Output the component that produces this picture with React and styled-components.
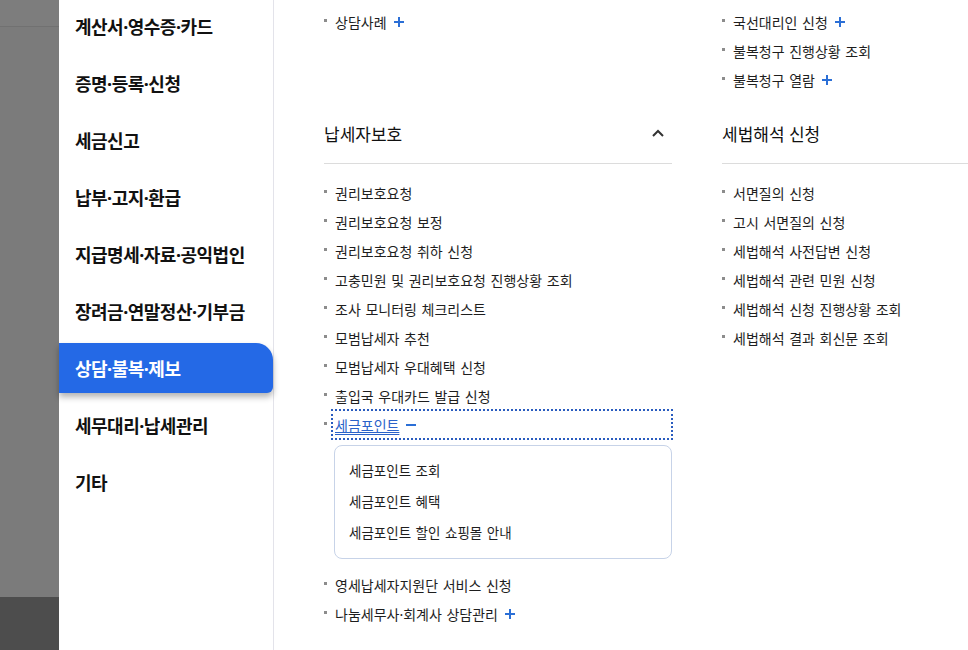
import React from 'react';
import styled, { createGlobalStyle, css } from 'styled-components';

//STYLE
const GlobalStyle = createGlobalStyle`
  html, body { margin: 0; padding: 0; background: #fff; }
  body { font-family: "Noto Sans", "Noto Sans CJK KR", sans-serif; color: #1e1e1e; }
  ul { list-style: none; margin: 0; padding: 0; }
`;

const Page = styled.div`display: flex; height: 650px; overflow: hidden;`;

const Backdrop = styled.div`width: 59px; flex-shrink: 0; display: flex; flex-direction: column; background: #7b7b7b;`;
const BackdropTop = styled.div`height: 26px; border-bottom: 1px solid #717171; background: #7d7d7d;`;
const BackdropMid = styled.div`flex: 1;`;
const BackdropFoot = styled.div`height: 53px; background: #4d4d4d;`;

const Sidebar = styled.ul`
  width: 214px; flex-shrink: 0; padding-top: 1px;
  border-right: 1px solid #e3e3ea; background: #fff;
  display: flex; flex-direction: column; gap: 7px;
`;
const SideItem = styled.li`
  height: 50px; display: flex; align-items: center; padding-left: 16px;
  font-size: 18px; font-weight: 700; letter-spacing: -0.5px; color: #111;
  ${p => p.$active && css`
    background: #2469e6; color: #fff;
    border-radius: 0 17px 6px 0;
    box-shadow: 0 4px 6px rgba(0, 0, 0, 0.3);
  `}
`;

const Content = styled.div`flex: 1; overflow: hidden; padding: 7px 0 0 50px;`;
const Grid = styled.div`display: grid; grid-template-columns: 348px 348px; column-gap: 50px; row-gap: 9px;`;
const Section = styled.section``;
const Heading = styled.div`
  height: 60px; display: flex; align-items: center; justify-content: space-between;
  border-bottom: 1px solid #dcdcdc; padding-right: 8px;
  font-size: 17px; color: #111;
`;
const List = styled.ul`padding-top: ${p => p.$top || 0}px;`;
const Item = styled.li`
  height: 29px; display: flex; align-items: center;
  font-size: 14px; word-spacing: 1px; color: #1e1e1e; white-space: nowrap;
  &::before { content: ""; width: 3px; height: 3px; background: #8c8c8c; margin: 0 8px 2px 0; flex-shrink: 0; }
`;
const ItemLink = styled.a`
  flex: 1; align-self: stretch; display: flex; align-items: center; gap: 7px;
  margin-left: -3px; padding-left: 3px; color: #2a62c9;
  outline: 2px dotted #2a5cbf; outline-offset: -1px;
`;
const Under = styled.span`text-decoration: underline; text-underline-offset: 3px;`;
const Sub = styled.ul`
  margin: 6px 0 11px 10px; padding: 8px 0 11px 14px;
  border: 1px solid #c7d3e8; border-radius: 8px;
`;
const SubItem = styled.li`height: 31px; display: flex; align-items: center; font-size: 13.5px; word-spacing: 1px; color: #1e1e1e;`;

const Plus = () => (
  <svg width="10" height="10" viewBox="0 0 10 10" style={{ marginLeft: 7, flexShrink: 0 }}>
    <path d="M5 0V10M0 5H10" stroke="#2b6fd6" strokeWidth="2" />
  </svg>
);
const Minus = () => (
  <svg width="10" height="10" viewBox="0 0 10 10">
    <path d="M0 5H10" stroke="#2b6fd6" strokeWidth="2" />
  </svg>
);
const Chevron = () => (
  <svg width="12" height="8" viewBox="0 0 12 8">
    <polyline points="1,7 6,2 11,7" fill="none" stroke="#333" strokeWidth="2" />
  </svg>
);

const sideMenu = ['계산서·영수증·카드', '증명·등록·신청', '세금신고', '납부·고지·환급', '지급명세·자료·공익법인',
  '장려금·연말정산·기부금', '상담·불복·제보', '세무대리·납세관리', '기타'];

const protect = ['권리보호요청', '권리보호요청 보정', '권리보호요청 취하 신청', '고충민원 및 권리보호요청 진행상황 조회',
  '조사 모니터링 체크리스트', '모범납세자 추천', '모범납세자 우대혜택 신청', '출입국 우대카드 발급 신청'];
const interpret = ['서면질의 신청', '고시 서면질의 신청', '세법해석 사전답변 신청', '세법해석 관련 민원 신청',
  '세법해석 신청 진행상황 조회', '세법해석 결과 회신문 조회'];

function App() {
  return (
    <Page>
      <GlobalStyle />
      <Backdrop>
        <BackdropTop />
        <BackdropMid />
        <BackdropFoot />
      </Backdrop>
      <Sidebar>
        {sideMenu.map(m => <SideItem key={m} $active={m === '상담·불복·제보'}>{m}</SideItem>)}
      </Sidebar>
      <Content>
        <Grid>
          <List>
            <Item>상담사례<Plus /></Item>
          </List>
          <List>
            <Item>국선대리인 신청<Plus /></Item>
            <Item>불복청구 진행상황 조회</Item>
            <Item>불복청구 열람<Plus /></Item>
          </List>
          <Section>
            <Heading>납세자보호<Chevron /></Heading>
            <List $top={14}>
              {protect.map(t => <Item key={t}>{t}</Item>)}
              <Item>
                <ItemLink href="#"><Under>세금포인트</Under><Minus /></ItemLink>
              </Item>
              <Sub>
                <SubItem>세금포인트 조회</SubItem>
                <SubItem>세금포인트 혜택</SubItem>
                <SubItem>세금포인트 할인 쇼핑몰 안내</SubItem>
              </Sub>
              <Item>영세납세자지원단 서비스 신청</Item>
              <Item>나눔세무사·회계사 상담관리<Plus /></Item>
            </List>
          </Section>
          <Section>
            <Heading>세법해석 신청</Heading>
            <List $top={14}>
              {interpret.map(t => <Item key={t}>{t}</Item>)}
            </List>
          </Section>
        </Grid>
      </Content>
    </Page>
  );
}

export default App;
